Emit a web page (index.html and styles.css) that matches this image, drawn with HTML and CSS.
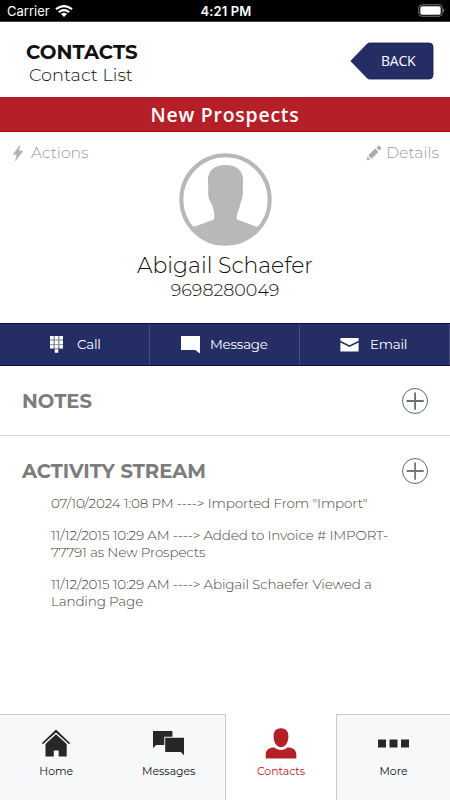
FILE: index.html
```html
<!DOCTYPE html>
<html lang="en">
<head>
    <meta charset="utf-8">
    <title>Contacts</title>
    <link rel="stylesheet" href="styles.css">
</head>
<body>
    <div class="status-bar">
        <div class="carrier">
            <span>Carrier</span>
            <svg width="18" height="12" viewBox="0 0 18 12" fill="none" stroke="#fff" stroke-width="2.2">
                <path d="M1 4.2Q9-2 17 4.2M3.8 7.2Q9 3 14.2 7.2"/>
                <path d="M6 9Q9 6.6 12 9L9 12Z" fill="#fff" stroke="none"/>
            </svg>
        </div>
        <span class="time">4:21 PM</span>
        <svg class="battery" width="27" height="13" viewBox="0 0 27 13">
            <rect x=".75" y=".75" width="23.5" height="11.5" rx="3.3" fill="none" stroke="#777"/>
            <rect x="2.3" y="2.3" width="20.4" height="8.4" rx="1.8" fill="#fff"/>
            <path d="M25.2 4.4q2.2 2.1 0 4.2z" fill="#888"/>
        </svg>
    </div>

    <header class="header">
        <div class="titles">
            <h1>CONTACTS</h1>
            <p>Contact List</p>
        </div>
        <a class="back">
            <svg width="84" height="38" viewBox="0 0 84 38">
                <path d="M.8 19 17.3 2Q18.3 1 19.7 1H79Q83 1 83 5V33Q83 37 79 37H19.7Q18.3 37 17.3 36Z" fill="#242d64" stroke="#10164f" stroke-width=".8"/>
            </svg>
            <span>BACK</span>
        </a>
    </header>

    <div class="banner">New Prospects</div>

    <section class="profile">
        <div class="profile-links">
            <a class="link">
                <svg width="10" height="16" viewBox="0 0 10 16"><path d="M6.9.2.1 9.6H3.9L2.4 15.9 10 5.9H5.9Z" fill="#b4b4b4" stroke="#b4b4b4" stroke-width=".5"/></svg>
                <span>Actions</span>
            </a>
            <a class="link">
                <svg width="16" height="16" viewBox="0 0 16 16" fill="#aaa"><path d="M.5 15.5 1.5 11.5 4.3 14.3ZM2.3 10.4 9.1 3.6 12.4 6.9 5.6 13.7ZM10.4 2.7 12.4.9Q13 .4 13.6 1L15 2.4Q15.5 3 15 3.7L13.3 5.6Z"/></svg>
                <span>Details</span>
            </a>
        </div>
        <svg class="avatar" width="93" height="93" viewBox="0 0 93 93">
            <circle cx="46.5" cy="46.5" r="44.2" fill="none" stroke="#b8b8b8" stroke-width="4"/>
            <path d="M46.5 12C35 12 28.5 18 29 28C29 33 29.6 35 29.1 38.5C28.8 43 30.2 46.5 32 50C34.4 56 36.3 61 34.9 66.4L13.8 74.2A42.9 42.9 0 0 0 79.2 74.2L58.1 66.4C56.7 63 59 59 60.5 54.5C61 51 64.1 45 64 39C63.3 36 64.3 33 64 28C64.5 18 58 12 46.5 12Z" fill="#b8b8b8"/>
        </svg>
        <h2 class="name">Abigail Schaefer</h2>
        <p class="phone">9698280049</p>
    </section>

    <nav class="contact-bar">
        <a class="call">
            <svg width="13" height="17" viewBox="0 0 13 17" fill="#fff">
                <path d="M0 0h3.6v3.6H0zM4.7 0h3.6v3.6H4.7zM9.4 0H13v3.6H9.4zM0 4.4h3.6V8H0zM4.7 4.4h3.6V8H4.7zM9.4 4.4H13V8H9.4zM0 8.8h3.6v3.6H0zM4.7 8.8h3.6v3.6H4.7zM9.4 8.8H13v3.6H9.4zM4.7 13.2h3.6v3.6H4.7z"/>
                <path d="M0 0h13v12.4H0z" opacity=".35"/>
            </svg>
            <span>Call</span>
        </a>
        <a class="message">
            <svg width="19" height="18" viewBox="0 0 19 18"><path d="M0 0h19v17.6L14.3 14H0Z" fill="#fff"/></svg>
            <span>Message</span>
        </a>
        <a class="email">
            <svg width="19" height="14" viewBox="0 0 19 14" fill="#fff"><path d="M.4 0h18.2v2.7L9.5 7.2.4 2.7ZM.4 4.4l9.1 4.5 9.1-4.5V13.4H.4Z"/></svg>
            <span>Email</span>
        </a>
    </nav>

    <section class="notes">
        <div class="section-head">
            <h3>NOTES</h3>
            <svg width="26" height="26" viewBox="0 0 26 26" fill="none" stroke="#64717a">
                <circle cx="13" cy="13" r="12.5" stroke="#5d6674"/><path d="M4.5 13h17.2M13.1 4.5v17.2" stroke-width="1.8"/>
            </svg>
        </div>
    </section>

    <section class="activity">
        <div class="section-head">
            <h3>ACTIVITY STREAM</h3>
            <svg width="26" height="26" viewBox="0 0 26 26" fill="none" stroke="#727a7d">
                <circle cx="13" cy="13" r="12.5" stroke="#5d6674"/><path d="M4.5 13h17.2M13.1 4.5v17.2" stroke-width="1.8"/>
            </svg>
        </div>
        <ul class="stream">
            <li>07/10/2024 1:08 PM ----&gt; Imported From "Import"</li>
            <li>11/12/2015 10:29 AM ----&gt; Added to Invoice # IMPORT-<br>77791 as New Prospects</li>
            <li>11/12/2015 10:29 AM ----&gt; Abigail Schaefer Viewed a<br>Landing Page</li>
        </ul>
    </section>

    <nav class="tabs">
        <a class="tab">
            <svg width="30" height="30" viewBox="0 0 30 30" fill="#272727">
                <path d="M.7 14.2 15 .4 29.3 14.2 27.8 15 15 3.4 2.2 15Z"/>
                <path d="M4.5 15.1 15 5.2 25.7 15.1V27.4H17.7V21.5H12.8V27.4H4.5Z"/>
            </svg>
            <span>Home</span>
        </a>
        <a class="tab">
            <svg width="31" height="30" viewBox="0 0 31 30" fill="#272727">
                <path d="M0 2H19.4V7.7H11.3V16H3.1L0 19.3Z"/>
                <path d="M12.2 8.7H31V26.2L27.8 23H12.2Z"/>
            </svg>
            <span>Messages</span>
        </a>
        <a class="tab active">
            <svg width="32" height="32" viewBox="0 0 32 32" fill="#b52028">
                <path d="M16 .3C11.3.3 8.5 3 8.6 8.3C8.6 14.5 11.5 19.2 16 19.2S23.4 14.5 23.4 8.3C23.5 3 20.7.3 16 .3Z"/>
                <path d="M.7 30.6V26.3C.7 21.9 4.4 19.3 9.4 19.5C12.8 22.8 19.2 22.8 22.6 19.5C27.6 19.3 31.3 21.9 31.3 26.3V30.6Z"/>
            </svg>
            <span>Contacts</span>
        </a>
        <a class="tab">
            <svg width="31" height="30" viewBox="0 0 31 30" fill="#272727"><path d="M0 10.5h8v8H0zM11.5 10.5h8v8h-8zM23 10.5h8v8h-8z"/></svg>
            <span>More</span>
        </a>
    </nav>
</body>
</html>
```
FILE: styles.css
```css
* { box-sizing: border-box; }
body { margin: 0; height: 800px; display: flex; flex-direction: column; overflow: hidden; background: #fff; font-family: Montserrat, Inter, sans-serif; font-weight: 300; color: #111; white-space: nowrap; }
h1, h2, h3, p, ul { margin: 0; padding: 0; }
svg { display: block; flex: none; }

.status-bar { height: 22px; flex: none; background: #000; color: #fff; display: grid; grid-template-columns: 1fr auto 1fr; align-items: center; padding: 0 5px 0 7px; border-bottom: 1px solid #444; font: 400 13px/20px Inter, sans-serif; }
.carrier { display: flex; align-items: center; gap: 5px; }
.time { font-weight: 600; letter-spacing: 0.1px; }
.battery { justify-self: end; }

.header { height: 75px; flex: none; display: flex; justify-content: space-between; padding: 18px 16px 0 26px; }
.titles { display: flex; flex-direction: column; }
h1 { font-size: 19.8px; line-height: 24px; font-weight: 700; }
.titles p { font-size: 17.7px; line-height: 21px; padding-left: 3px; color: #111; }
.back { display: grid; margin-top: 2px; height: 38px; color: #fff; font: 400 14px/37px "Open Sans", sans-serif; }
.back svg, .back span { grid-area: 1 / 1; }
.back span { padding-left: 31px; letter-spacing: -0.2px; }

.banner { height: 35px; flex: none; background: #b52028; color: #fff; text-align: center; font: 600 19.4px/35px "Open Sans", sans-serif; letter-spacing: 0.8px; border-bottom: 1px solid #aa0a14; }

.profile { height: 191px; flex: none; display: flex; flex-direction: column; align-items: center; }
.profile-links { width: 100%; height: 21px; padding: 10px 11px 0 13px; display: flex; justify-content: space-between; color: #999; font-size: 15.6px; line-height: 21px; }
.link { display: flex; gap: 8px; height: 21px; align-items: center; }
.link:last-child { gap: 4px; }
.name { font-size: 22px; line-height: 28px; font-weight: 300; margin-top: 6px; }
.phone { font-size: 17.5px; line-height: 20px; }

.contact-bar { height: 43px; flex: none; display: grid; grid-template-columns: 150px 150px 150px; background: #242d64; color: #fff; font-size: 13.4px; letter-spacing: -0.2px; border-top: 1px solid #0c0e50; border-bottom: 1px solid #0c0e50; }
.contact-bar a { display: flex; align-items: center; border-right: 1px solid #454d80; }
.contact-bar span { padding-bottom: 1px; font-weight: 400; }
.call { padding-left: 50px; gap: 14px; }
.message { padding-left: 31px; gap: 10px; }
.email { padding-left: 40px; gap: 11px; }

.notes { height: 70px; flex: none; border-bottom: 1px solid #d2d2d2; }
.section-head { height: 69px; display: flex; justify-content: space-between; align-items: center; padding: 1px 22px 0; }
h3 { font-size: 19.6px; line-height: 24px; font-weight: 700; color: #7c7c7c; }
.activity { flex: 1; }
.stream { list-style: none; margin-left: 51px; margin-top: -10px; font-size: 13.5px; letter-spacing: -0.15px; line-height: 16.3px; color: #444; }
.stream li { margin-bottom: 16.2px; }

.tabs { height: 86px; flex: none; display: grid; grid-template-columns: 112.5px 112.5px 112px 113px; font-size: 10.9px; }
.tab { background: #f7f8fa; border-top: 1px solid #cbcad1; display: flex; flex-direction: column; align-items: center; padding-top: 13px; }
.tab svg { height: 32px; }
.tab span { line-height: 16px; margin-top: 3px; font-weight: 400; }
.tab.active { background: #fff; color: #b52028; border: 1px solid #cbcad1; border-width: 0 1px; padding-top: 14px; }
```
